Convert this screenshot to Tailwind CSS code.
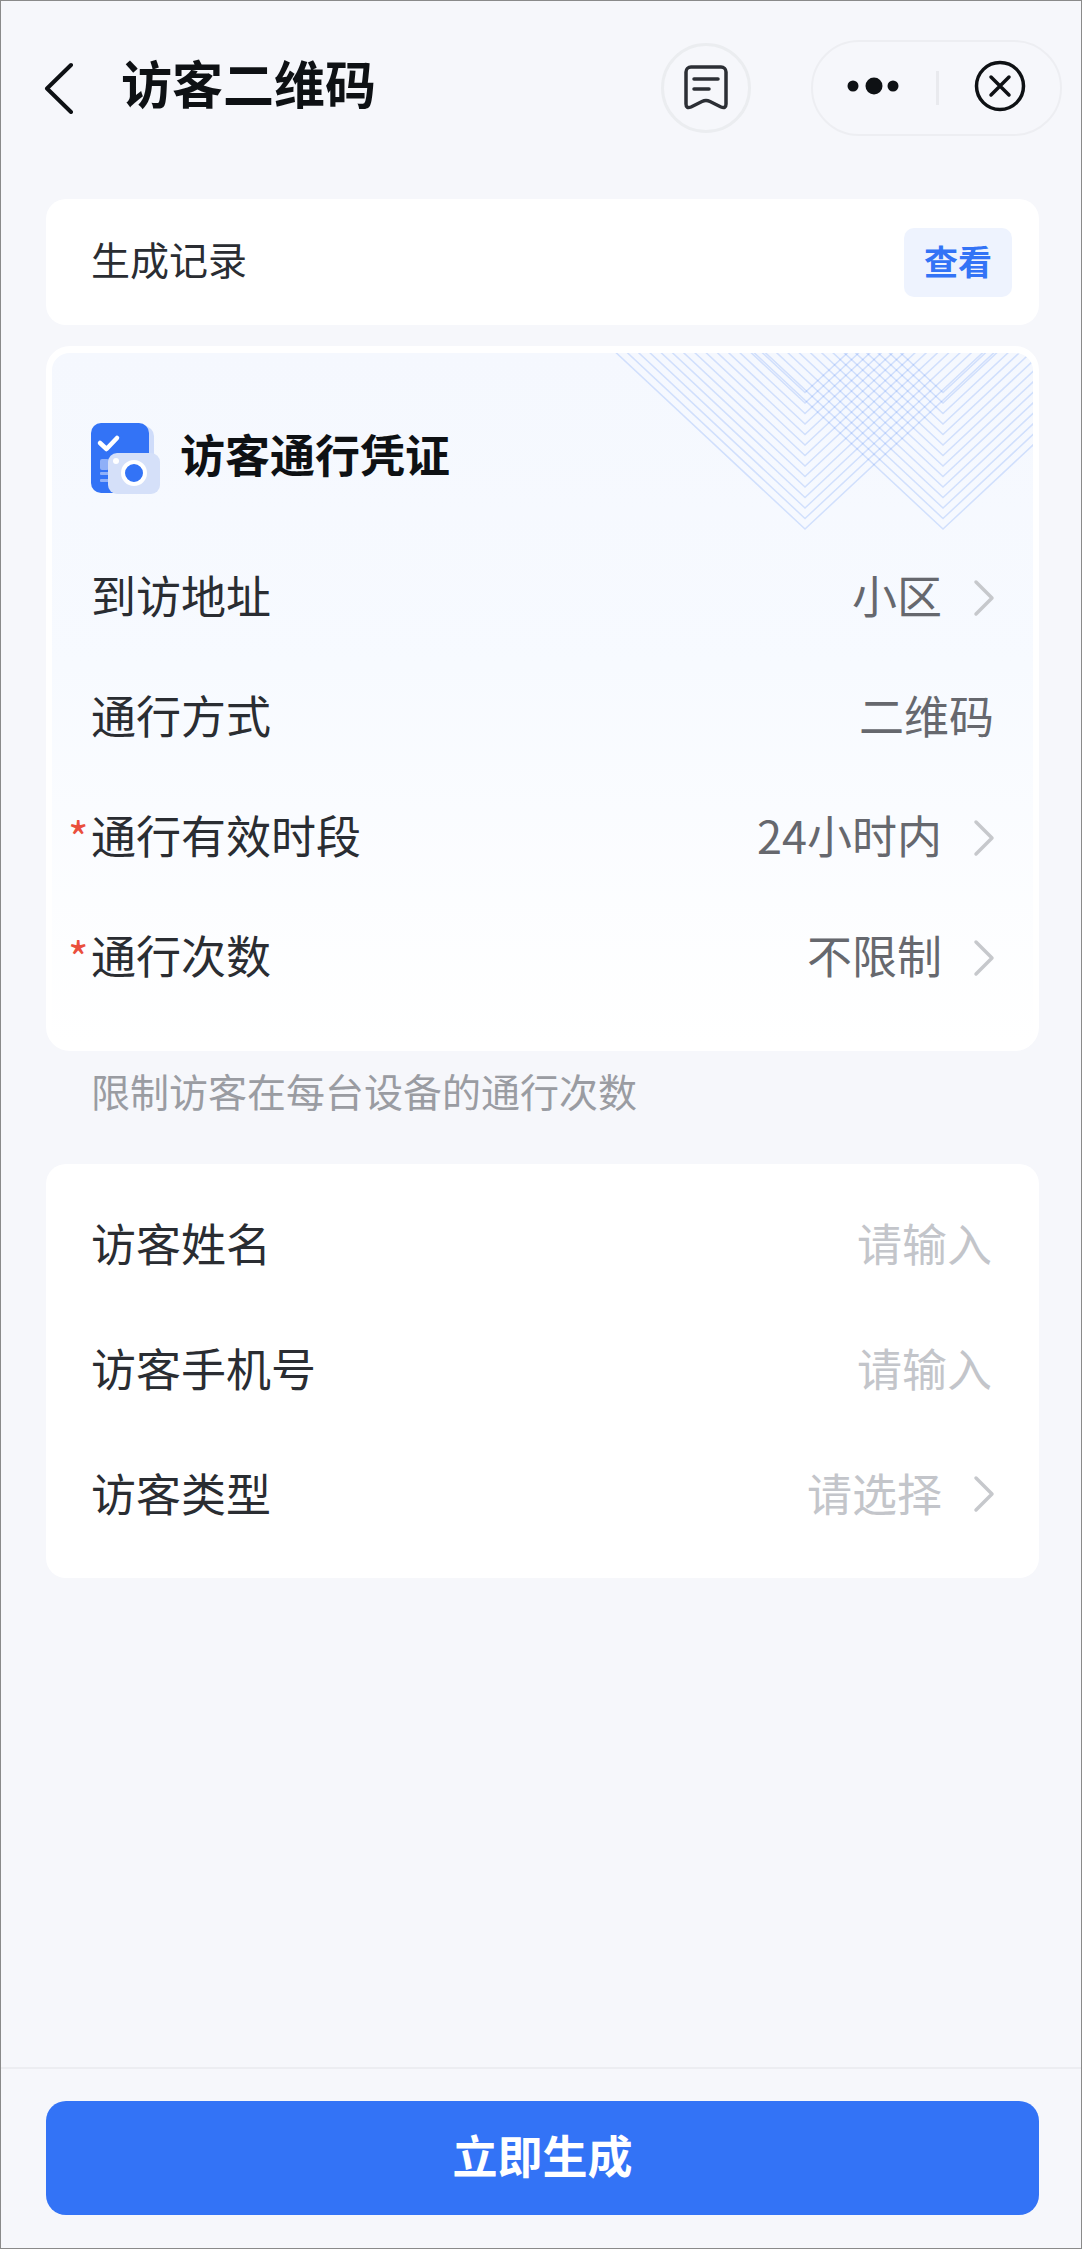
<!DOCTYPE html>
<html lang="zh-CN">
<head>
  <meta charset="UTF-8" />
  <meta name="viewport" content="width=device-width, initial-scale=1.0"/>
  <title>访客二维码</title>
  <script src="https://cdn.jsdelivr.net/npm/@tailwindcss/browser@4"></script>
</head>
<body class="bg-[#f6f7fb]">
  <div class="w-[1082px] h-[2249px] flex flex-col border border-[#8a8a8a] bg-[#f6f7fb] text-[#2a2d32] font-['Noto_Sans_CJK_SC',sans-serif]">

    <!-- Nav bar -->
    <header class="h-[198px] shrink-0 flex items-start relative">
      <svg class="ml-[42px] mt-[61px] w-[32px] h-[52px]" viewBox="0 0 32 52" fill="none" stroke="#0e1114" stroke-width="4" stroke-linecap="round" stroke-linejoin="round"><path d="M28 3 L4 26.500 L28 50"/></svg>
      <h1 class="ml-[46px] mt-[49px] text-[51px] leading-[64px] font-bold text-[#0e1114]">访客二维码</h1>
      <div class="ml-auto mt-[42px] w-[90px] h-[90px] rounded-full border-[3px] border-[#ebedf0] flex items-center justify-center">
        <svg class="w-[48px] h-[48px]" viewBox="0 0 48 48" fill="none" stroke="#2c2f35" stroke-width="3.500" stroke-linecap="round" stroke-linejoin="round">
          <path d="M4 8 a5 5 0 0 1 5 -5 h30 a5 5 0 0 1 5 5 v32 q0 5 -5 3 l-11 -5.500 q-4 -2 -8 0 l-11 5.500 q-5 2 -5 -3 z"/>
          <path d="M12 15 h24 M12 25 h15"/>
        </svg>
      </div>
      <div class="ml-[60px] mr-[19px] mt-[39px] w-[251px] h-[96px] rounded-full border-2 border-[#edeef2] flex items-center pl-[33px]">
        <svg class="w-[58px] h-[24px] -mt-[4px]" viewBox="0 0 58 24" fill="#0e1114"><circle cx="7" cy="12" r="5.500"/><circle cx="28" cy="12" r="8.500"/><circle cx="47" cy="12" r="5.500"/></svg>
        <div class="ml-[32px] w-[3px] h-[34px] bg-[#e9eaee]"></div>
        <svg class="ml-[35px] w-[52px] h-[52px] -mt-[4px]" viewBox="0 0 52 52" fill="none" stroke="#0e1114" stroke-linecap="round"><circle cx="26" cy="26" r="23.500" stroke-width="3.500"/><path d="M17 17 L35 35 M35 17 L17 35" stroke-width="3.500"/></svg>
      </div>
    </header>

    <!-- Generation records -->
    <section class="ml-[45px] mr-[42px] h-[126px] shrink-0 bg-white rounded-[20px] flex items-center justify-between pl-[45px] pr-[27px]">
      <span class="text-[39px] leading-[50px] -mt-[8px]">生成记录</span>
      <button class="w-[108px] h-[69px] pb-[3px] rounded-[10px] bg-[#eef3fe] text-[#3373f6] text-[34px] font-bold">查看</button>
    </section>

    <!-- Pass details -->
    <section class="ml-[45px] mr-[42px] mt-[21px] h-[705px] shrink-0 relative rounded-[24px] border-x-[6px] border-y-[7px] border-white bg-linear-to-b from-[#f5f8fe] via-[#f7faff] via-[45%] to-white overflow-hidden flex flex-col">
      <svg class="absolute left-[-52px] top-[-353px] w-[1082px] h-[700px] pointer-events-none blur-[0.6px]" viewBox="0 0 1082 700" fill="none" stroke="#3373f6" stroke-width="1.500" stroke-opacity="0.190">
        <defs>
          <g id="chevrons">
            <path d="M-240 -224 L0 0 L240 -224"/>
            <path d="M-240 -213.500 L0 10.500 L240 -213.500"/>
            <path d="M-240 -203 L0 21 L240 -203"/>
            <path d="M-240 -192.500 L0 31.500 L240 -192.500"/>
            <path d="M-240 -182 L0 42 L240 -182"/>
            <path d="M-240 -171.500 L0 52.500 L240 -171.500"/>
            <path d="M-240 -161 L0 63 L240 -161"/>
            <path d="M-240 -150.500 L0 73.500 L240 -150.500"/>
            <path d="M-240 -140 L0 84 L240 -140"/>
            <path d="M-240 -129.500 L0 94.500 L240 -129.500"/>
            <path d="M-240 -119 L0 105 L240 -119"/>
            <path d="M-240 -108.500 L0 115.500 L240 -108.500"/>
            <path d="M-240 -98 L0 126 L240 -98"/>
            <path d="M-240 -87.500 L0 136.500 L240 -87.500"/>
          </g>
        </defs>
        <use href="#chevrons" x="805" y="392.500"/>
        <use href="#chevrons" x="943" y="392.500"/>
      </svg>

      <div class="relative h-[222px] shrink-0 flex items-start pl-[39px] pt-[70px]">
        <svg class="w-[70px] h-[71px]" viewBox="0 0 70 71" fill="none">
          <rect x="10" y="3" width="53" height="60" rx="10" fill="#cfdcfa"/>
          <rect x="0" y="0" width="58" height="70" rx="10" fill="#3373f6"/>
          <path d="M9 20 L15.500 26 L26 15" stroke="#ffffff" stroke-width="4.500" stroke-linecap="round" stroke-linejoin="round"/>
          <rect x="9" y="36" width="9" height="11" rx="2" fill="#8fb0f8"/>
          <rect x="9" y="49" width="9" height="3" rx="1" fill="#8fb0f8"/>
          <rect x="9" y="56" width="9" height="3" rx="1" fill="#8fb0f8"/>
          <rect x="17" y="30" width="52" height="41" rx="9" fill="#d5e0f9"/>
          <circle cx="43" cy="50" r="11" fill="#3373f6" stroke="#ffffff" stroke-width="4"/>
          <circle cx="25" cy="38" r="3" fill="#ffffff"/>
        </svg>
        <h2 class="ml-[19px] mt-[1px] text-[45px] leading-[60px] font-bold text-[#0e1114]">访客通行凭证</h2>
      </div>

      <div class="relative flex flex-col">
        <div class="h-[120px] -mt-[40px] flex items-center pl-[39px] pr-[37px]">
          <span class="text-[45px] leading-[60px]">到访地址</span>
          <span class="ml-auto text-[45px] leading-[60px] text-[#66686e]">小区</span>
          <svg class="ml-[30px] mt-[6px] w-[24px] h-[38px]" viewBox="0 0 24 38" fill="none" stroke="#c6c8cc" stroke-width="3.500" stroke-linecap="round" stroke-linejoin="round"><path d="M4 3 L20 19 L4 35"/></svg>
        </div>
        <div class="h-[120px] flex items-center pl-[39px] pr-[39px]">
          <span class="text-[45px] leading-[60px]">通行方式</span>
          <span class="ml-auto text-[45px] leading-[60px] text-[#66686e]">二维码</span>
        </div>
        <div class="h-[120px] flex items-center pl-[39px] pr-[37px] relative">
          <span class="absolute left-[16px] top-[39px] text-[44px] leading-[44px] text-[#ea4f3d]">*</span>
          <span class="text-[45px] leading-[60px]">通行有效时段</span>
          <span class="ml-auto text-[45px] leading-[60px] text-[#66686e]">24小时内</span>
          <svg class="ml-[30px] mt-[6px] w-[24px] h-[38px]" viewBox="0 0 24 38" fill="none" stroke="#c6c8cc" stroke-width="3.500" stroke-linecap="round" stroke-linejoin="round"><path d="M4 3 L20 19 L4 35"/></svg>
        </div>
        <div class="h-[120px] flex items-center pl-[39px] pr-[37px] relative">
          <span class="absolute left-[16px] top-[39px] text-[44px] leading-[44px] text-[#ea4f3d]">*</span>
          <span class="text-[45px] leading-[60px]">通行次数</span>
          <span class="ml-auto text-[45px] leading-[60px] text-[#66686e]">不限制</span>
          <svg class="ml-[30px] mt-[6px] w-[24px] h-[38px]" viewBox="0 0 24 38" fill="none" stroke="#c6c8cc" stroke-width="3.500" stroke-linecap="round" stroke-linejoin="round"><path d="M4 3 L20 19 L4 35"/></svg>
        </div>
      </div>
    </section>

    <p class="h-[113px] shrink-0 pl-[90px] pt-[11px] text-[39px] leading-[56px] text-[#9a9ca2]">限制访客在每台设备的通行次数</p>

    <!-- Visitor form -->
    <section class="ml-[45px] mr-[42px] h-[414px] shrink-0 bg-white rounded-[20px] flex flex-col pt-[16px]">
      <div class="h-[125px] flex items-center pl-[45px] pr-[47px]">
        <span class="text-[45px] leading-[60px]">访客姓名</span>
        <span class="ml-auto text-[45px] leading-[60px] text-[#c3c5ca]">请输入</span>
      </div>
      <div class="h-[125px] flex items-center pl-[45px] pr-[47px]">
        <span class="text-[45px] leading-[60px]">访客手机号</span>
        <span class="ml-auto text-[45px] leading-[60px] text-[#c3c5ca]">请输入</span>
      </div>
      <div class="h-[125px] flex items-center pl-[45px] pr-[43px]">
        <span class="text-[45px] leading-[60px]">访客类型</span>
        <span class="ml-auto text-[45px] leading-[60px] text-[#c3c5ca]">请选择</span>
        <svg class="ml-[30px] mt-[3px] w-[24px] h-[38px]" viewBox="0 0 24 38" fill="none" stroke="#c6c8cc" stroke-width="3.500" stroke-linecap="round" stroke-linejoin="round"><path d="M4 3 L20 19 L4 35"/></svg>
      </div>
    </section>

    <!-- Submit bar -->
    <footer class="mt-auto shrink-0 border-t-2 border-[#ecedf1] pl-[45px] pr-[42px] pt-[32px] pb-[33px]">
      <button class="w-full h-[114px] pb-[6px] rounded-[20px] bg-[#3373f6] text-white text-[45px] font-bold">立即生成</button>
    </footer>
  </div>
</body>
</html>
